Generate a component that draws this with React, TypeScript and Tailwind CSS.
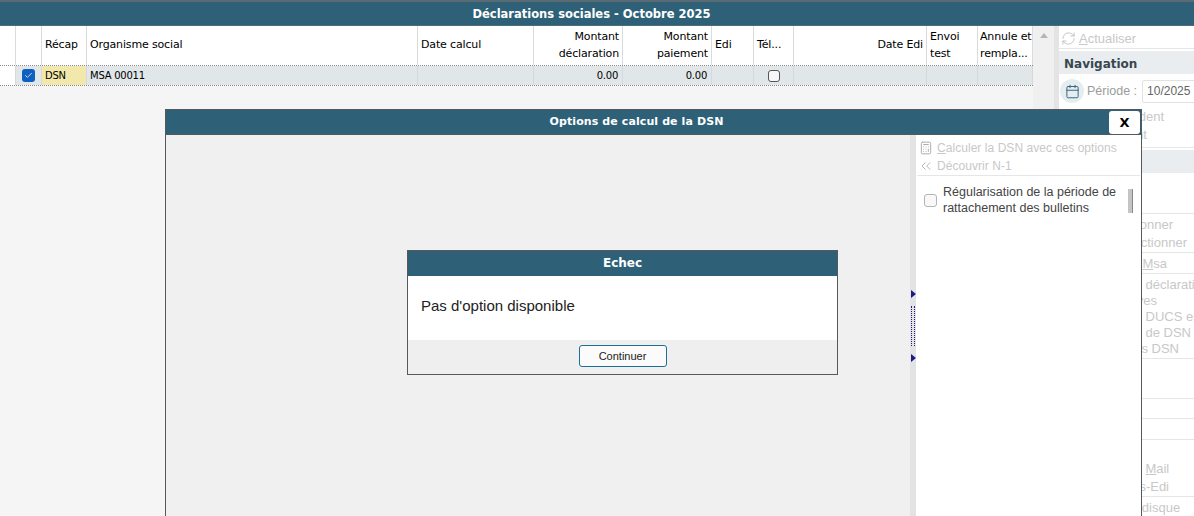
import React from 'react';
import { RefreshCw, Calendar, Calculator, ChevronsLeft, Check } from 'lucide-react';

const TAHOMA = 'font-["DejaVu_Sans",sans-serif]';
const ARIAL = 'font-["Liberation_Sans",sans-serif]';

const columns = [
  { label: '', w: 'w-[16px]', cls: '' },
  { label: '', w: 'w-[26px]', cls: '' },
  { label: 'Récap', w: 'w-[45px]', cls: 'text-left' },
  { label: 'Organisme social', w: 'w-[331px]', cls: 'text-left' },
  { label: 'Date calcul', w: 'w-[116px]', cls: 'text-left' },
  { label: 'Montant\ndéclaration', w: 'w-[89px]', cls: 'text-right' },
  { label: 'Montant\npaiement', w: 'w-[89px]', cls: 'text-right' },
  { label: 'Edi', w: 'w-[42px]', cls: 'text-left' },
  { label: 'Tél...', w: 'w-[40px]', cls: 'text-left' },
  { label: 'Date Edi', w: 'w-[133px]', cls: 'text-right' },
  { label: 'Envoi\ntest', w: 'w-[51px]', cls: 'text-left' },
  { label: 'Annule et\nrempla...', w: 'w-[55px]', cls: 'text-left' },
];

const Grid = () => (
  <div className={`w-[1033px] text-[11px] text-black ${TAHOMA}`}>
    <div className="flex h-[39px] bg-white tracking-[-0.15px]">
      {columns.map((c, i) => (
        <div
          key={i}
          className={`${c.w} shrink-0 flex items-center border-r border-[#d9dcdd] pl-[3px] pr-[3px] pb-[2px] leading-[17px] whitespace-pre ${c.cls} ${c.cls === 'text-right' ? 'justify-end' : ''} ${i === 11 ? '!pl-[2px]' : ''}`}
        >
          <span>{c.label}</span>
        </div>
      ))}
    </div>
    <div className="flex h-[21px] border-y border-dotted border-[#8a8a8a] bg-white text-[10px] tracking-[-0.25px]">
      {columns.map((c, i) => (
        <div
          key={i}
          className={`${c.w} shrink-0 flex items-center border-r border-[#d3d9dc] px-[3px] ${i === 0 ? 'bg-white' : i === 2 ? 'bg-[#f2e8ab]' : 'bg-[#e1e6e8]'} ${c.cls}`}
        >
          {i === 1 && (
            <span className="mx-auto flex h-[13px] w-[13px] items-center justify-center rounded-[3px] bg-[#0d5fc0]">
              <Check size={9} strokeWidth={2} className="text-white" />
            </span>
          )}
          {i === 2 && 'DSN'}
          {i === 3 && 'MSA 00011'}
          {(i === 5 || i === 6) && <span className="w-full pr-[1px]">0.00</span>}
          {i === 8 && <span className="mx-auto h-[12px] w-[12px] rounded-[3px] border border-[#555] bg-[#f7f7f7]" />}
        </div>
      ))}
    </div>
  </div>
);

const RightPanel = () => (
  <div className={`w-[135px] shrink-0 h-full bg-white overflow-hidden text-[13px] text-[#c8c8c8] whitespace-nowrap ${ARIAL}`}>
    <div className="flex h-[23px] items-center gap-[3px] pl-[2px] pt-[3px] border-b border-[#e6e6e6]">
      <RefreshCw size={15} strokeWidth={1.3} className="text-[#b8b8b8]" />
      <span><span className="underline">A</span>ctualiser</span>
    </div>
    <div className={`h-[23px] mt-[2px] bg-[#e9edef] pl-[5px] text-[12px] font-bold leading-[26px] text-[#37474f] ${TAHOMA}`}>Navigation</div>
    <div className="flex h-[34px] items-center pl-[1px]">
      <span className="flex h-[24px] w-[24px] shrink-0 items-center justify-center rounded-full bg-[#e6edf0]">
        <Calendar size={15} strokeWidth={1.5} className="text-[#2e6178]" />
      </span>
      <span className="ml-[3px] shrink-0 text-[12.5px] text-[#9b9b9b]">Période :</span>
      <span className="ml-[5px] flex h-[23px] w-[60px] shrink-0 items-center rounded-[2px] border border-[#e2e2e2] pl-[4px] text-[12px] text-[#666]">10/2025</span>
    </div>
    <div className="h-[40px] border-b border-[#e6e6e6] leading-[18px]">
      <div className="w-[105px] text-right">Précédent</div>
      <div className="w-[88px] text-right">Suivant</div>
    </div>
    <div className="mt-[2px] h-[23px] bg-[#e9edef]" />
    <div className="h-[41px] border-b border-[#e6e6e6]" />
    <div className="h-[39px] border-b border-[#e6e6e6] pt-[2px] leading-[18px]">
      <div className="w-[114px] text-right">Sélectionner</div>
      <div className="w-[128px] text-right">Désélectionner</div>
    </div>
    <div className="h-[21px] border-b border-[#e6e6e6] pl-[56px] pt-[2px] leading-[18px]">
      Test <span className="underline">M</span>sa
    </div>
    <div className="h-[85px] border-b border-[#e6e6e6] pt-[3px] leading-[16px]">
      <div className="pl-[62px]">Les déclarations</div>
      <div className="w-[98px] text-right">Récapitulatives</div>
      <div className="pl-[62px]">Les DUCS en</div>
      <div className="w-[132px] text-right">Historique de DSN</div>
      <div className="w-[120px] text-right">Archives DSN</div>
    </div>
    <div className="h-[40px] border-b border-[#e6e6e6]" />
    <div className="h-[20px] border-b border-[#e6e6e6]" />
    <div className="h-[21px] border-b border-[#e6e6e6]" />
    <div className="h-[57px] border-b border-[#e6e6e6] pt-[20px] leading-[18px]">
      <div className="pl-[64px]">par <span className="underline">M</span>ail</div>
      <div className="w-[110px] text-right">Tous-Edi</div>
    </div>
    <div className="pl-[59px] pt-[2px] leading-[18px]">Sur disque</div>
  </div>
);

const Splitter = () => (
  <div className="w-[6px] shrink-0 bg-[#e3e3e3] flex flex-col items-end pt-[155px]">
    <span className="h-0 w-0 border-y-[4px] border-l-[5px] border-y-transparent border-l-[#1a1a8c]" />
    <span className="my-[8px] h-[40px] w-[4px] mr-[1px] border-x border-dotted border-[#1a1a8c]" />
    <span className="h-0 w-0 border-y-[4px] border-l-[5px] border-y-transparent border-l-[#1a1a8c]" />
  </div>
);

const OptionsDialog = () => (
  <div className="absolute left-[165px] top-[109px] flex h-[420px] w-[977px] flex-col border border-[#55595c] bg-[#f0f0f0]">
    <div className={`relative h-[25px] shrink-0 bg-[#2e6178] border-b border-[#55595c] pr-[34px] text-center text-[11px] font-bold leading-[24px] tracking-[0.1px] text-white ${TAHOMA}`}>
      Options de calcul de la DSN
    </div>
    <button className={`absolute right-[1px] top-[1px] h-[23px] w-[31px] rounded-[3px] bg-white text-[13px] font-bold text-black ${TAHOMA}`}>X</button>
    <div className="flex flex-1">
      <div className="flex-1" />
      <Splitter />
      <div className={`w-[225px] shrink-0 bg-white ${ARIAL}`}>
        <div className="h-[41px] border-b border-[#e6e6e6] mx-[1px] pt-[4px] pl-[2px] text-[12px] text-[#c8c8c8] leading-[18px] tracking-[0.05px]">
          <div className="flex items-center gap-[4px]">
            <Calculator size={14} strokeWidth={1.6} className="text-[#a8a8a8]" />
            <span><span className="underline">C</span>alculer la DSN avec ces options</span>
          </div>
          <div className="flex items-center gap-[3px] -ml-[1px]">
            <ChevronsLeft size={16} strokeWidth={1.1} className="text-[#999]" />
            <span>Découvrir N-1</span>
          </div>
        </div>
        <div className="flex pt-[9px] pl-[8px]">
          <span className="mt-[9px] h-[13px] w-[13px] shrink-0 rounded-[3px] border border-[#b5b5b5] bg-[#f8f8f8]" />
          <div className="ml-[6px] w-[184px] text-[12.5px] leading-[15.5px] text-[#444]">
            Régularisation de la période de rattachement des bulletins
          </div>
          <span className="ml-[1px] mt-[4px] h-[24px] w-[5px] bg-[#c4c4c4] border-r border-[#888]" />
        </div>
      </div>
    </div>
  </div>
);

const FailDialog = () => (
  <div className="absolute left-[407px] top-[250px] w-[431px] h-[125px] border border-[#55595c] bg-white flex flex-col">
    <div className={`h-[25px] shrink-0 bg-[#2e6178] text-center text-[12px] font-bold leading-[24px] text-white ${TAHOMA}`}>Echec</div>
    <div className={`flex-1 pl-[13px] pt-[20px] text-[15px] leading-[20px] text-[#222] ${ARIAL}`}>Pas d'option disponible</div>
    <div className="flex h-[34px] shrink-0 items-center justify-center bg-[#efefef] pb-[2px]">
      <button className={`h-[22px] w-[88px] rounded-[3px] border border-[#1b6f98] bg-[#fbfbfb] text-[11px] text-[#222] ${ARIAL}`}>Continuer</button>
    </div>
  </div>
);

const App: React.FC = () => {
  return (
    <div className="relative h-[516px] w-[1194px] overflow-hidden bg-[#f5f5f5]">
      {/* Title */}
      <div className={`h-[26px] border-t-2 border-[#5a6a72] border-b border-b-[#4a6d7e] bg-[#2e6178] text-center text-[11.5px] font-bold leading-[24px] text-white pr-[11px] ${TAHOMA}`}>
        Déclarations sociales - Octobre 2025
      </div>

      <div className="flex h-[490px]">
        <Grid />
        <div className="w-[21px] shrink-0 bg-[#f0f0f0] flex justify-center pt-[7px]">
          <span className="h-0 w-0 border-x-[4px] border-b-[5px] border-x-transparent border-b-[#b5b5b5]" />
        </div>
        <div className="w-[5px] shrink-0 bg-[#e4e4e4]" />
        <RightPanel />
      </div>

      <OptionsDialog />
      <FailDialog />
    </div>
  );
};

export default App;
